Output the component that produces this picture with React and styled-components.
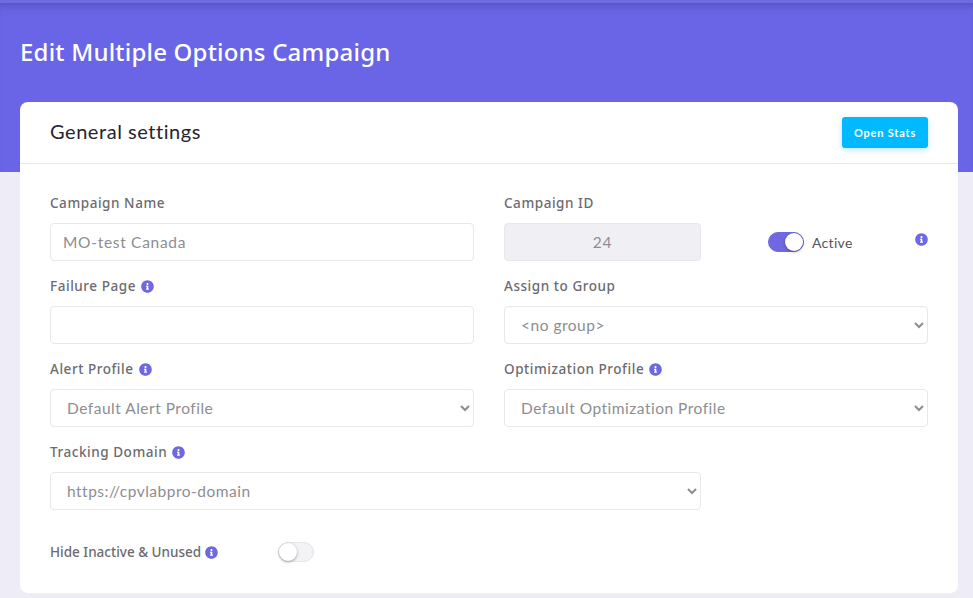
import { createGlobalStyle, styled } from 'styled-components';
import { FaInfoCircle } from 'react-icons/fa';

const GlobalStyle = createGlobalStyle`
  html, body {
    margin: 0;
    padding: 0;
    height: 100%;
    overflow: hidden;
    background: #eeedf7;
    font-family: "Lato", "Noto Sans", sans-serif;
  }
  * { box-sizing: border-box; }
`;

const Banner = styled.header`
  height: 172px;
  padding: 34px 20px 0;
  background: #6a65e6;
  border-top: 3px solid #6f6ae0;
  box-shadow: inset 0 8px 8px -6px rgba(40, 40, 110, 0.35);
`;

const Title = styled.h1`
  margin: 0;
  color: #fff;
  font-family: "Noto Sans", "Lato", sans-serif;
  font-size: 24px;
  line-height: 30px;
  font-weight: 500;
  letter-spacing: 0.2px;
`;

const Card = styled.section`
  margin: -70px 15px 0 20px;
  height: 491px;
  background: #fff;
  border-radius: 8px;
`;

const CardHeader = styled.div`
  height: 62px;
  padding: 0 30px;
  display: flex;
  align-items: center;
  justify-content: space-between;
  border-bottom: 1px solid #e8e8ec;
`;

const CardTitle = styled.h2`
  margin: -3px 0 0;
  font-size: 20px;
  font-weight: 400;
  letter-spacing: 0.55px;
  color: #25252f;
`;

const StatsButton = styled.button`
  width: 86px;
  height: 31px;
  margin-top: -1px;
  padding: 0;
  border: 0;
  border-radius: 3px;
  background: #00b9ff;
  color: #fff;
  font-family: inherit;
  font-size: 11px;
  font-weight: 700;
  letter-spacing: 0.8px;
  box-shadow: 0 2px 6px rgba(0, 150, 220, 0.25);
`;

const FormGrid = styled.div`
  display: grid;
  grid-template-columns: repeat(4, 197px);
  column-gap: 30px;
  row-gap: 15px;
  padding: 29px 30px 0;
`;

const Field = styled.div`
  grid-column: span ${(p) => p.$span || 2};
  display: flex;
  flex-direction: column;
`;

const Label = styled.label`
  height: 20px;
  margin-bottom: 10px;
  display: flex;
  align-items: center;
  gap: 5px;
  color: #6b6b70;
  font-family: "Noto Sans", "Lato", sans-serif;
  font-size: 13.5px;
  font-weight: 500;
  letter-spacing: 0.55px;
`;

const Info = styled(FaInfoCircle)`
  flex: none;
  width: 13px;
  height: 13px;
  color: #6f68e0;
`;

const controlStyles = `
  width: 100%;
  height: 38px;
  border: 1px solid #e8e8ec;
  border-radius: 4px;
  background: #fff;
  color: #8d8d92;
  font-family: inherit;
  font-size: 15.5px;
  outline: none;
`;

const TextInput = styled.input`
  ${controlStyles}
  padding: 0 12px;
  letter-spacing: 0.7px;
  text-align: ${(p) => p.$align || 'left'};
  &::placeholder { color: #8d8d92; opacity: 1; }
  &:disabled { background: #f0f0f4; }
`;

const Select = styled.select`
  ${controlStyles}
  padding: 0 12px;
  letter-spacing: 0.5px;
`;

const ActiveCell = styled.div`
  height: 38px;
  margin-top: 30px;
  display: flex;
  align-items: center;
  justify-content: space-between;
  padding-left: 37px;
`;

const ActiveGroup = styled.div`
  display: flex;
  align-items: center;
  gap: 8px;
  color: #55555c;
  font-size: 14px;
  letter-spacing: 0.3px;
`;

const CornerInfo = styled(Info)`
  margin-top: -6px;
`;

const Track = styled.span`
  position: relative;
  display: inline-block;
  width: 36px;
  height: 20px;
  border-radius: 10px;
  background: ${(p) => (p.$on ? '#6f68e0' : '#f3f3f6')};
  border: 1px solid ${(p) => (p.$on ? '#6f68e0' : '#e6e6ea')};
`;

const Thumb = styled.span`
  position: absolute;
  top: 0;
  left: ${(p) => (p.$on ? '16px' : '0')};
  width: 18px;
  height: 18px;
  border-radius: 50%;
  background: #fff;
  box-shadow: 0 1px 3px rgba(0, 0, 0, 0.35);
`;

const HideRow = styled.div`
  display: flex;
  align-items: center;
  padding: 32px 30px 0;
`;

const HideLabel = styled.span`
  width: 228px;
  display: flex;
  align-items: center;
  gap: 4px;
  color: #6b6b70;
  font-family: "Noto Sans", "Lato", sans-serif;
  font-size: 13.5px;
  font-weight: 500;
  letter-spacing: 0;
`;

const Toggle = ({ on }) => (
  <Track $on={on}>
    <Thumb $on={on} />
  </Track>
);

export default function App() {
  return (
    <>
      <GlobalStyle />
      <Banner>
        <Title>Edit Multiple Options Campaign</Title>
      </Banner>
      <Card>
        <CardHeader>
          <CardTitle>General settings</CardTitle>
          <StatsButton>Open Stats</StatsButton>
        </CardHeader>
        <FormGrid>
          <Field>
            <Label>Campaign Name</Label>
            <TextInput placeholder="MO-test Canada" />
          </Field>
          <Field $span={1}>
            <Label>Campaign ID</Label>
            <TextInput $align="center" value="24" disabled readOnly />
          </Field>
          <ActiveCell>
            <ActiveGroup>
              <Toggle on />
              Active
            </ActiveGroup>
            <CornerInfo />
          </ActiveCell>
          <Field>
            <Label>Failure Page <Info /></Label>
            <TextInput />
          </Field>
          <Field>
            <Label>Assign to Group</Label>
            <Select defaultValue="none">
              <option value="none">&lt;no group&gt;</option>
            </Select>
          </Field>
          <Field>
            <Label>Alert Profile <Info /></Label>
            <Select>
              <option>Default Alert Profile</option>
            </Select>
          </Field>
          <Field>
            <Label>Optimization Profile <Info /></Label>
            <Select>
              <option>Default Optimization Profile</option>
            </Select>
          </Field>
          <Field $span={3}>
            <Label>Tracking Domain <Info /></Label>
            <Select>
              <option>https://cpvlabpro-domain</option>
            </Select>
          </Field>
        </FormGrid>
        <HideRow>
          <HideLabel>Hide Inactive &amp; Unused <Info /></HideLabel>
          <Toggle />
        </HideRow>
      </Card>
    </>
  );
}
